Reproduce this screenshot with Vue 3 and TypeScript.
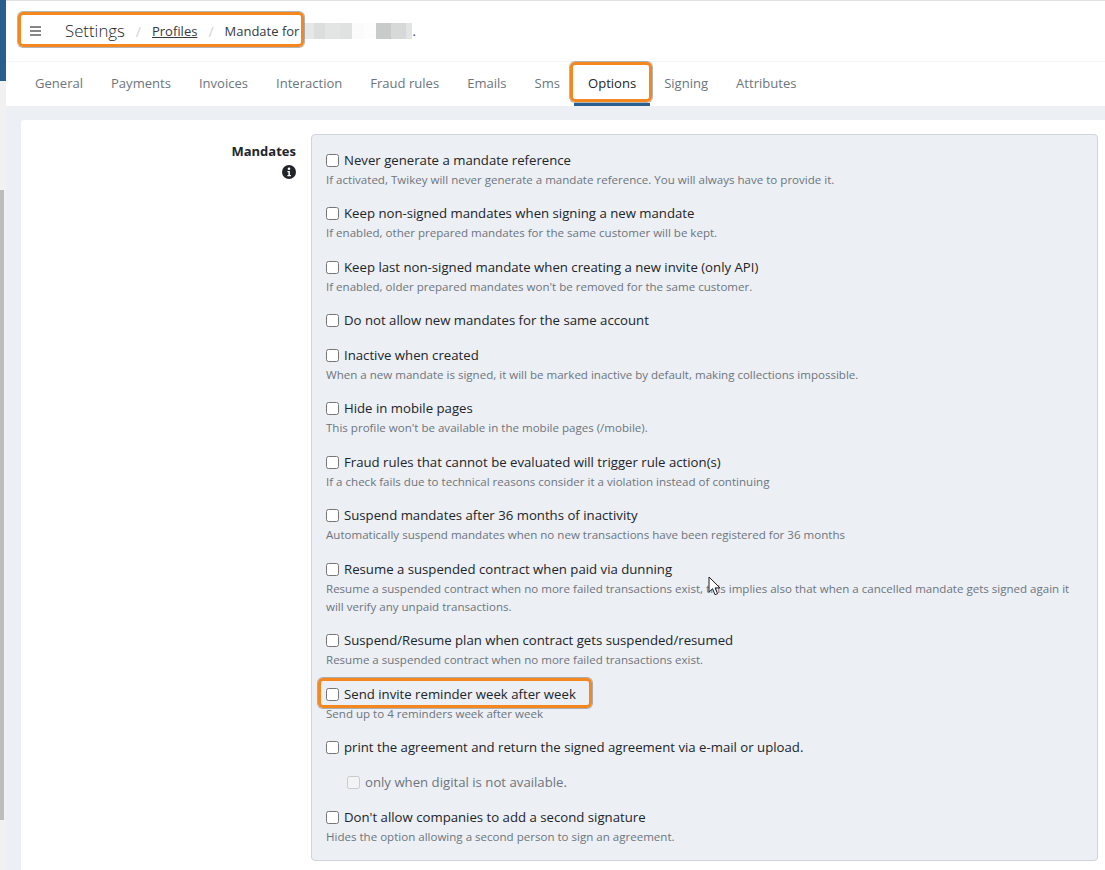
<script setup lang="ts">
interface Opt { label: string; help?: string; mark?: boolean; sub?: boolean; disabled?: boolean }
const tabs: string[] = ['General', 'Payments', 'Invoices', 'Interaction', 'Fraud rules', 'Emails', 'Sms', 'Options', 'Signing', 'Attributes']
const options: Opt[] = [
  { label: 'Never generate a mandate reference', help: 'If activated, Twikey will never generate a mandate reference. You will always have to provide it.' },
  { label: 'Keep non-signed mandates when signing a new mandate', help: 'If enabled, other prepared mandates for the same customer will be kept.' },
  { label: 'Keep last non-signed mandate when creating a new invite (only API)', help: "If enabled, older prepared mandates won't be removed for the same customer." },
  { label: 'Do not allow new mandates for the same account' },
  { label: 'Inactive when created', help: 'When a new mandate is signed, it will be marked inactive by default, making collections impossible.' },
  { label: 'Hide in mobile pages', help: "This profile won't be available in the mobile pages (/mobile)." },
  { label: 'Fraud rules that cannot be evaluated will trigger rule action(s)', help: 'If a check fails due to technical reasons consider it a violation instead of continuing' },
  { label: 'Suspend mandates after 36 months of inactivity', help: 'Automatically suspend mandates when no new transactions have been registered for 36 months' },
  { label: 'Resume a suspended contract when paid via dunning', help: 'Resume a suspended contract when no more failed transactions exist, this implies also that when a cancelled mandate gets signed again it will verify any unpaid transactions.' },
  { label: 'Suspend/Resume plan when contract gets suspended/resumed', help: 'Resume a suspended contract when no more failed transactions exist.' },
  { label: 'Send invite reminder week after week', help: 'Send up to 4 reminders week after week', mark: true },
  { label: 'print the agreement and return the signed agreement via e-mail or upload.' },
  { label: 'only when digital is not available.', sub: true, disabled: true },
  { label: "Don't allow companies to add a second signature", help: 'Hides the option allowing a second person to sign an agreement.' },
]
const blur: { w: number; c: string }[] = [
  { w: 10, c: '#e6e7e7' }, { w: 11, c: '#dcdddd' }, { w: 15, c: '#e3e4e4' }, { w: 12, c: '#e0e1e1' },
  { w: 12, c: '#fbfbfb' }, { w: 12, c: '#fdfdfd' }, { w: 15, c: '#c9caca' }, { w: 15, c: '#d7d8d8' }, { w: 6, c: '#e2e3e3' },
]
</script>

<template>
  <div class="page">
    <aside class="rail">
      <div class="rail-brand"></div>
      <div class="rail-track"><div class="rail-thumb"></div></div>
    </aside>
    <main class="main">
      <header class="crumbs">
        <div class="crumbs-inner">
          <svg class="burger" width="11" height="10" viewBox="0 0 11 10"><path d="M0 1h11M0 5h11M0 9h11" stroke="#111" stroke-width="1.2" fill="none" /></svg>
          <span class="crumb-title">Settings</span>
          <span class="sep">/</span>
          <a class="crumb-link">Profiles</a>
          <span class="sep">/</span>
          <span class="crumb-text">Mandate for</span>
          <span class="blur"><i v-for="(b, i) in blur" :key="i" :style="{ width: b.w + 'px', background: b.c }"></i></span>
          <span class="crumb-dot">.</span>
          <span class="mark mark-crumbs"></span>
        </div>
      </header>
      <nav class="tabs">
        <a v-for="t in tabs" :key="t" class="tab" :class="{ active: t === 'Options' }">
          {{ t }}
          <span v-if="t === 'Options'" class="mark mark-tab"></span>
        </a>
      </nav>
      <section class="body">
        <div class="card">
          <div class="side">
            <div class="side-title">Mandates</div>
            <svg class="info" width="14" height="14" viewBox="0 0 14 14">
              <circle cx="7" cy="7" r="7" fill="#212529" />
              <circle cx="7" cy="3.8" r="1.3" fill="#fff" />
              <path d="M5.4 6h2.5v4h1v1.2H5.4V10h1V7.2h-1z" fill="#fff" />
            </svg>
          </div>
          <div class="panel">
            <div v-for="o in options" :key="o.label" class="opt" :class="{ sub: o.sub, disabled: o.disabled }">
              <label class="check">
                <input type="checkbox" :disabled="o.disabled" />
                <span>{{ o.label }}</span>
                <span v-if="o.mark" class="mark mark-row"></span>
              </label>
              <div v-if="o.help" class="help">{{ o.help }}</div>
            </div>
          </div>
        </div>
      </section>
    </main>
    <svg class="cursor" width="15" height="22" viewBox="0 0 15 22">
      <path d="M1 1v15l3.6-3.3 2.4 6 2.6-1-2.5-5.8H12z" fill="#fff" stroke="#1c1c1c" stroke-width="1" stroke-linejoin="round" />
    </svg>
  </div>
</template>

<style scoped>
.page {
  position: relative;
  display: flex;
  width: 1105px;
  height: 870px;
  overflow: hidden;
  font-family: "Open Sans", "Noto Sans", sans-serif;
  font-size: 14px;
  line-height: 21px;
  color: #212529;
  background: #fff;
}
.rail { width: 6px; flex: none; display: flex; flex-direction: column; background: #f1f1f1; }
.rail-brand { height: 81px; background: #285f8f; }
.rail-track { flex: 1; padding-top: 109px; }
.rail-thumb { width: 4px; height: 630px; background: #bdbdbd; }
.main { flex: 1; min-width: 0; display: flex; flex-direction: column; }
.crumbs {
  height: 62px;
  flex: none;
  box-sizing: border-box;
  border-top: 1px solid #dee2e6;
  border-bottom: 1px solid #f4f5f7;
  display: flex;
  align-items: flex-start;
  padding: 20px 0 0 24px;
}
.crumbs-inner { display: flex; align-items: center; height: 20px; position: relative; }
.burger { margin-right: 24px; }
.crumb-title { font-size: 16.8px; font-weight: 300; color: #212529; position: relative; top: -1px; }
.sep { color: #ced4da; margin: 0 11px; font-size: 14px; }
.crumb-link { font-size: 13px; color: #343a40; text-decoration: underline; }
.crumb-text { font-size: 13px; color: #343a40; white-space: nowrap; }
.blur { display: flex; height: 16px; margin-left: 5px; }
.blur i { display: block; height: 16px; }
.crumb-dot { font-size: 13px; color: #343a40; }
.tabs {
  height: 44px;
  flex: none;
  display: flex;
  padding-left: 15px;
}
.tab {
  position: relative;
  box-sizing: border-box;
  height: 44px;
  padding: 11px 14px 0;
  font-size: 13.05px;
  color: #6c757d;
  white-space: nowrap;
}
.tab.active { color: #212529; border-bottom: 3px solid #285f8f; }
.body { flex: 1; min-height: 0; background: #eceff4; padding: 14px 0 0 15px; }
.card { height: 100%; background: #fff; display: flex; border-radius: 3px 0 0 0; }
.side { width: 275px; flex: none; box-sizing: border-box; padding-top: 21px; text-align: right; }
.side-title { font-weight: 700; font-size: 13px; line-height: 20px; }
.info { display: block; margin: 4px 0 0 auto; }
.panel {
  margin: 14px 7px 0 15px;
  flex: 1;
  align-self: flex-start;
  box-sizing: border-box;
  height: 727px;
  padding: 15px 14px 0;
  background: #eceff4;
  border: 1px solid #ced4da;
  border-radius: 4px;
}
.opt { margin-bottom: 14px; }
.opt.sub { padding-left: 21px; }
.check { display: flex; width: fit-content; align-items: center; position: relative; font-size: 13.2px; }
.check input { width: 13px; height: 13px; margin: 0 5px 0 0; flex: none; }
.disabled .check { color: #6c757d; }
.help { font-size: 11.55px; line-height: 18.36px; color: #6c757d; }
.mark {
  position: absolute;
  box-sizing: border-box;
  border: 3.5px solid #f5871f;
  border-radius: 5px;
  box-shadow: 0 0 0 1px rgba(90, 90, 90, .45);
  pointer-events: none;
}
.mark-crumbs { left: -12px; top: -9px; width: 286px; height: 35px; }
.mark-tab { left: -4px; top: 0; width: 82px; height: 40px; }
.mark-row { left: -8px; top: -6px; width: 274px; height: 30px; }
.cursor { position: absolute; left: 708px; top: 576px; }
</style>
